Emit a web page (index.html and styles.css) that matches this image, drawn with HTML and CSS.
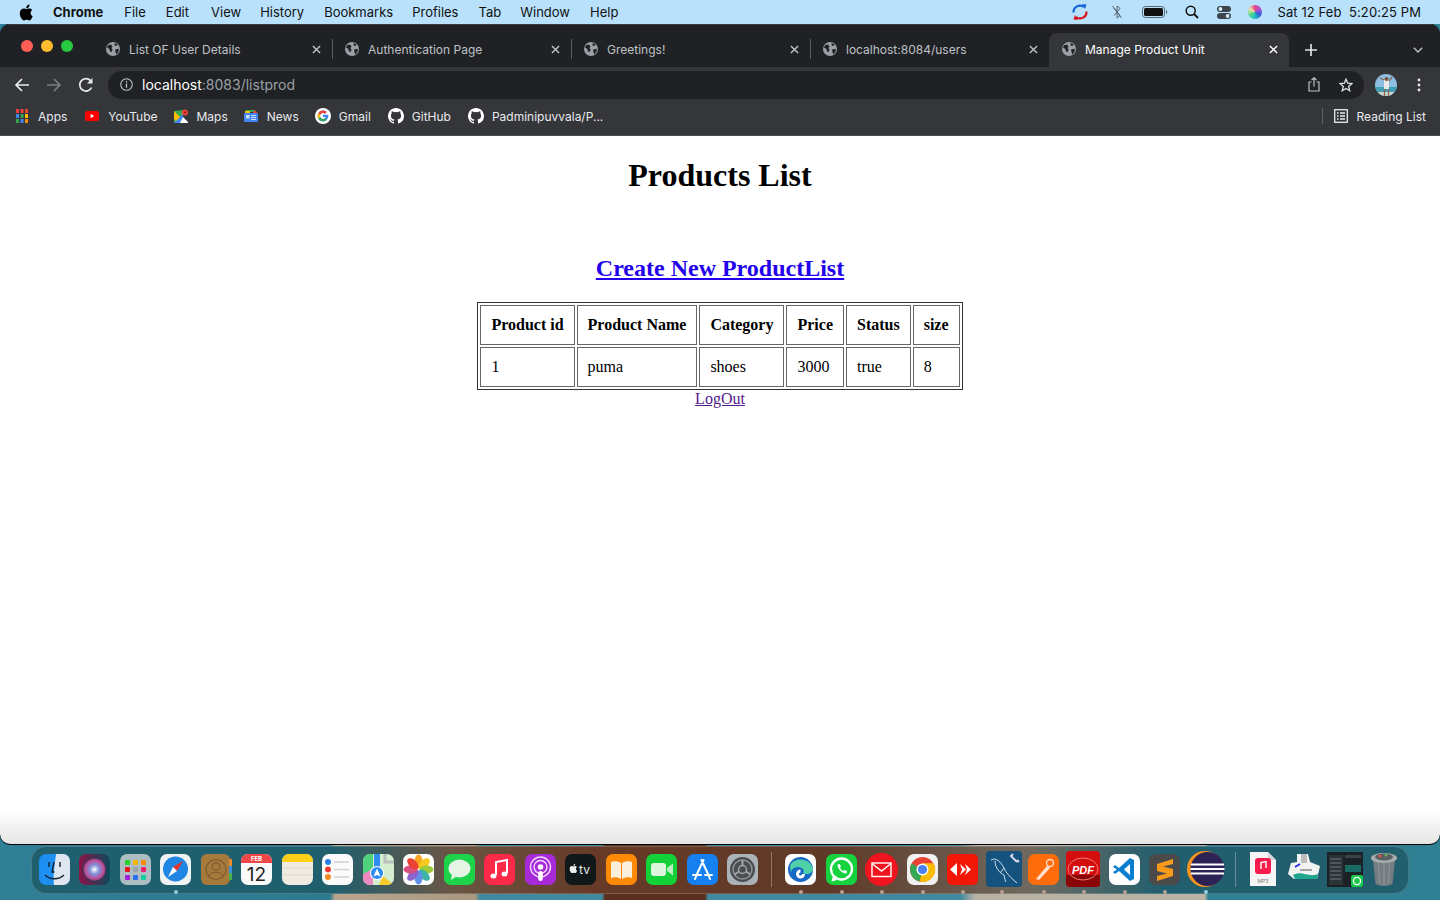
FILE: index.html
```html
<!DOCTYPE html>
<html lang="en">
<head>
<meta charset="utf-8">
<title>Manage Product Unit</title>
<link rel="stylesheet" href="styles.css">
</head>
<body>
<svg class="defs" width="0" height="0">
  <symbol id="globe" viewBox="0 0 14 14">
    <circle cx="7" cy="7" r="7" fill="#9aa0a6"/>
    <path d="M2 3.2 5 2.6 6.6 4.4 5.4 6 6.6 7.6 5.6 10 4 9.4 3.4 7 1 5.6ZM8.6 1 11.6 2.4 10.4 4 8.6 3.6ZM9 7.4 12.8 6.8 12.6 9.6 10.4 12.6 9.6 10.4Z" fill="#202124"/>
  </symbol>
  <symbol id="close" viewBox="0 0 10 10">
    <path d="M1 1 9 9M9 1 1 9" fill="none" stroke="currentColor" stroke-width="1.6"/>
  </symbol>
  <symbol id="octo" viewBox="0 0 16 16">
    <path fill="#fff" d="M8 0C3.58 0 0 3.58 0 8c0 3.54 2.29 6.53 5.47 7.59.4.07.55-.17.55-.38v-1.34c-2.23.48-2.7-1.07-2.7-1.07-.36-.92-.89-1.17-.89-1.17-.73-.5.05-.49.05-.49.8.06 1.23.83 1.23.83.71 1.22 1.87.87 2.33.66.07-.52.28-.87.51-1.07-1.78-.2-3.64-.89-3.64-3.95 0-.87.31-1.59.82-2.15-.08-.2-.36-1.02.08-2.12 0 0 .67-.21 2.2.82a7.6 7.6 0 0 1 4 0c1.53-1.04 2.2-.82 2.2-.82.44 1.1.16 1.92.08 2.12.51.56.82 1.27.82 2.15 0 3.07-1.87 3.75-3.65 3.95.29.25.54.73.54 1.48v2.2c0 .21.15.46.55.38A8 8 0 0 0 16 8c0-4.42-3.58-8-8-8Z"/>
  </symbol>
</svg>

<div class="screen">
  <header class="menubar">
    <svg class="apple" viewBox="0 0 14 17"><path fill="#000" d="M11.6 9c0-2 1.6-2.9 1.7-3-1-1.3-2.4-1.500-2.900-1.500-1.200-.1-2.400.7-3 .7s-1.600-.7-2.600-.7C3.400 4.500 2.200 5.300 1.500 6.400.1 8.800 1.100 12.400 2.500 14.400c.7 1 1.500 2.100 2.500 2 1-.04 1.400-.6 2.600-.6s1.600.6 2.600.6 1.800-1 2.400-2c.8-1.100 1.100-2.200 1.100-2.300-.02-.01-2.100-.8-2.100-3.100ZM9.700 3.200c.5-.7.9-1.600.8-2.600-.8 0-1.800.5-2.400 1.200-.5.6-1 1.600-.8 2.500.9.1 1.800-.4 2.400-1.100Z"/></svg>
    <nav class="menus">
      <span class="menu-app">Chrome</span>
      <span>File</span><span class="menu-edit">Edit</span><span class="menu-tight">View</span><span>History</span><span class="menu-tight">Bookmarks</span><span>Profiles</span><span class="menu-tight">Tab</span><span>Window</span><span>Help</span>
    </nav>
    <div class="status">
      <svg class="st-sync" viewBox="0 0 18 18"><path d="M2.500 9.500A6.500 6.500 0 0 1 13 4" fill="none" stroke="#1565d8" stroke-width="2.200"/><path d="M11 1 15.500 1.500 14 6Z" fill="#1565d8"/><path d="M15.500 8.500A6.500 6.500 0 0 1 5 14" fill="none" stroke="#d8141c" stroke-width="2.200"/><path d="M7 17 2.500 16.500 4 12Z" fill="#d8141c"/></svg>
      <svg class="st-bt" viewBox="0 0 12 14"><path d="M3 3.500 9 10.500 6 13V1L9 3.500 3 10.500" fill="none" stroke="#56646c" stroke-width="1"/><path d="M1.500 1 10.500 13" stroke="#56646c" stroke-width="1"/></svg>
      <svg class="st-batt" viewBox="0 0 26 12"><rect x=".5" y=".5" width="22" height="11" rx="3" fill="none" stroke="#59666e"/><rect x="2" y="2" width="19" height="8" rx="1.600" fill="#111"/><path d="M24 4v4c.8-.3 1.200-1 1.200-2s-.4-1.700-1.200-2Z" fill="#59666e"/></svg>
      <svg class="st-search" viewBox="0 0 14 14"><circle cx="5.700" cy="5.700" r="4.500" fill="none" stroke="#111" stroke-width="1.500"/><path d="M9 9 13 13" stroke="#111" stroke-width="1.800"/></svg>
      <svg class="st-cc" viewBox="0 0 14 13"><rect x="0" y="0" width="14" height="6" rx="3" fill="#3b444a"/><circle cx="3.400" cy="3" r="1.900" fill="#d3ecfb"/><rect x="0" y="7" width="14" height="6" rx="3" fill="#3b444a"/><circle cx="10.600" cy="10" r="1.900" fill="#d3ecfb"/></svg>
      <span class="st-siri"></span>
      <span class="clock">Sat 12 Feb&nbsp; 5:20:25 PM</span>
    </div>
  </header>

  <main class="window">
    <div class="tabstrip">
      <div class="lights"><i class="red"></i><i class="amber"></i><i class="green"></i></div>
      <div class="tabs">
        <div class="tab"><svg class="fav"><use href="#globe"/></svg><span class="tab-title">List OF User Details</span><svg class="x"><use href="#close"/></svg></div>
        <div class="tab"><svg class="fav"><use href="#globe"/></svg><span class="tab-title">Authentication Page</span><svg class="x"><use href="#close"/></svg></div>
        <div class="tab"><svg class="fav"><use href="#globe"/></svg><span class="tab-title">Greetings!</span><svg class="x"><use href="#close"/></svg></div>
        <div class="tab tab-last"><svg class="fav"><use href="#globe"/></svg><span class="tab-title">localhost:8084/users</span><svg class="x"><use href="#close"/></svg></div>
        <div class="tab tab-active"><svg class="fav"><use href="#globe"/></svg><span class="tab-title">Manage Product Unit</span><svg class="x"><use href="#close"/></svg></div>
      </div>
      <svg class="newtab" viewBox="0 0 12 12"><path d="M6 0V12M0 6H12" stroke="#dfe1e5" stroke-width="1.700"/></svg>
      <svg class="tabmenu" viewBox="0 0 10 6"><path d="M.8.800 5 5 9.200.8" fill="none" stroke="#bdc1c6" stroke-width="1.400"/></svg>
    </div>

    <div class="toolbar">
      <svg class="nav" viewBox="0 0 16 16"><path d="M15 8H2M8 2 2 8l6 6" fill="none" stroke="#e8eaed" stroke-width="1.700"/></svg>
      <svg class="nav" viewBox="0 0 16 16"><path d="M1 8H14M8 2l6 6-6 6" fill="none" stroke="#7b7e83" stroke-width="1.700"/></svg>
      <svg class="nav" viewBox="0 0 16 16"><path d="M13.600 10.500A6.200 6.200 0 1 1 12.500 3.600" fill="none" stroke="#e8eaed" stroke-width="1.700"/><path d="M14.500 1V6.500H9Z" fill="#e8eaed"/></svg>
      <div class="omnibox">
        <svg class="info" viewBox="0 0 14 14"><circle cx="7" cy="7" r="6.200" fill="none" stroke="#bdc1c6" stroke-width="1.200"/><path d="M7 6V10.500" stroke="#bdc1c6" stroke-width="1.400"/><circle cx="7" cy="4" r=".9" fill="#bdc1c6"/></svg>
        <span class="url"><b>localhost</b>:8083/listprod</span>
        <svg class="share" viewBox="0 0 12 15"><path d="M3.500 5H1V14H11V5H8.500M6 9.500V1M3.500 3 6 .8 8.500 3" fill="none" stroke="#bdc1c6" stroke-width="1.200"/></svg>
        <svg class="star" viewBox="0 0 14 14"><path d="M7 1.200 8.700 5.200 13 5.600 9.700 8.400 10.700 12.700 7 10.400 3.300 12.700 4.300 8.400 1 5.600 5.300 5.200Z" fill="none" stroke="#dfe1e5" stroke-width="1.300"/></svg>
      </div>
      <svg class="avatar" viewBox="0 0 22 22"><defs><clipPath id="av"><circle cx="11" cy="11" r="11"/></clipPath></defs><g clip-path="url(#av)"><rect width="22" height="22" fill="#8dbfe0"/><rect y="13" width="22" height="9" fill="#3f9fb5"/><rect y="18" width="22" height="4" fill="#cfd3c8"/><rect x="9" y="6" width="5" height="9" fill="#e8e8e6"/><circle cx="11.500" cy="5" r="2" fill="#7a5540"/><path d="M9 6 5 4M14 7 17 3M9.500 15V22M13.500 15V22" stroke="#8a6450" stroke-width="1.300"/></g></svg>
      <svg class="kebab" viewBox="0 0 4 14"><circle cx="2" cy="2" r="1.400" fill="#e8eaed"/><circle cx="2" cy="7" r="1.400" fill="#e8eaed"/><circle cx="2" cy="12" r="1.400" fill="#e8eaed"/></svg>
    </div>

    <div class="bookmarks">
      <div class="bm"><svg class="bm-ic" viewBox="0 0 14 14"><g><rect x="1" y="0" width="3" height="4" fill="#ea4335"/><rect x="5.500" y="0" width="3" height="4" fill="#ea4335"/><rect x="10" y="0" width="3" height="4" fill="#ea4335"/><rect x="1" y="5" width="3" height="4" fill="#4285f4"/><rect x="5.500" y="5" width="3" height="4" fill="#34a853"/><rect x="10" y="5" width="3" height="4" fill="#fbbc04"/><rect x="1" y="10" width="3" height="4" fill="#34a853"/><rect x="5.500" y="10" width="3" height="4" fill="#4285f4"/><rect x="10" y="10" width="3" height="4" fill="#fb8c00"/></g></svg><span>Apps</span></div>
      <div class="bm"><svg class="bm-ic" viewBox="0 0 14 14"><rect y="2" width="14" height="10" rx="2.500" fill="#f00"/><path d="M5.600 4.800 9.200 7 5.600 9.200Z" fill="#fff"/></svg><span>YouTube</span></div>
      <div class="bm"><svg class="bm-ic" viewBox="0 0 14 14"><path d="M0 2 9 1V14H0Z" fill="#34a853"/><path d="M0 14 9 5V14Z" fill="#4285f4"/><path d="M0 2 6 8 2 12 0 10Z" fill="#fbbc04"/><path d="M9 8 14 13V14H6Z" fill="#fff"/><circle cx="11" cy="3.500" r="3" fill="#ea4335"/><circle cx="11" cy="3.500" r="1" fill="#8c1d14"/></svg><span>Maps</span></div>
      <div class="bm"><svg class="bm-ic" viewBox="0 0 14 14"><path d="M2 1H11L12 3H1Z" fill="#34a853"/><path d="M1 2H6V4H1Z" fill="#fbbc04"/><path d="M10 1 13 3V5H9Z" fill="#ea4335"/><rect x="0" y="4" width="14" height="9" rx="1" fill="#4285f4"/><rect x="2" y="6" width="3.500" height="3.500" fill="#cfe0fc"/><path d="M7 6.500H12M7 8.500H12M7 10.500H12" stroke="#cfe0fc"/></svg><span>News</span></div>
      <div class="bm"><svg class="bm-ic bm-g" viewBox="0 0 16 16"><circle cx="8" cy="8" r="8" fill="#fff"/><path d="M12.700 6.800H8V9.100h2.700C10.400 10.400 9.300 11 8 11a3 3 0 1 1 1.900-5.300l1.700-1.700A5.400 5.400 0 1 0 13.400 8c0-.4 0-.8-.1-1.200Z" fill="#4285f4"/><path d="M3.300 5.200 5.300 6.700A3 3 0 0 1 9.900 5.700L11.600 4A5.400 5.400 0 0 0 3.300 5.200Z" fill="#ea4335"/><path d="M2.600 8c0 1 .3 1.900.8 2.700L5.300 9.300A3 3 0 0 1 5.300 6.700L3.300 5.200C2.900 6 2.600 7 2.600 8Z" fill="#fbbc04"/><path d="M3.400 10.700A5.400 5.400 0 0 0 11.800 11.800L10 10.300C8.500 11.500 6 11 5.300 9.300Z" fill="#34a853"/></svg><span>Gmail</span></div>
      <div class="bm"><svg class="bm-ic bm-g"><use href="#octo"/></svg><span>GitHub</span></div>
      <div class="bm"><svg class="bm-ic bm-g"><use href="#octo"/></svg><span>Padminipuvvala/P...</span></div>
      <div class="reading">
        <svg class="rl-ic" viewBox="0 0 14 14"><rect x=".7" y=".7" width="12.600" height="12.600" fill="none" stroke="#e8eaed" stroke-width="1.300"/><path d="M3 4H4.500M3 7H4.500M3 10H4.500M6 4H11M6 7H11M6 10H11" stroke="#e8eaed" stroke-width="1.300"/></svg>
        <span>Reading List</span>
      </div>
    </div>

    <section class="page">
      <h1>Products List</h1>
      <br>
      <h2><a class="link-new" href="#">Create New ProductList</a></h2>
      <table class="products">
        <tr><th>Product id</th><th>Product Name</th><th>Category</th><th>Price</th><th>Status</th><th>size</th></tr>
        <tr><td>1</td><td>puma</td><td>shoes</td><td>3000</td><td>true</td><td>8</td></tr>
      </table>
      <a class="link-out" href="#">LogOut</a>
    </section>
  </main>

  <footer class="desktop">
    <div class="dock">
      <svg class="di" viewBox="0 0 31 31"><rect width="31" height="31" rx="7" fill="#1d8ff2"/><path d="M17 0H24a7 7 0 0 1 7 7V24a7 7 0 0 1-7 7H15C14 24 15 16 17 0Z" fill="#dfe6ef"/><path d="M10 8V13M21 8V13M15 8 13 18H15.500" fill="none" stroke="#123" stroke-width="1.400"/><path d="M6 21C11 26 20 26 25 21" fill="none" stroke="#123" stroke-width="1.300"/></svg>
      <svg class="di" viewBox="0 0 31 31"><defs><linearGradient id="siriBg" x1="0" x2="1"><stop offset="0" stop-color="#8c1248"/><stop offset="1" stop-color="#0c4a5a"/></linearGradient><radialGradient id="siriO"><stop offset="0" stop-color="#fff"/><stop offset=".4" stop-color="#7f8fd8"/><stop offset=".8" stop-color="#c34a92"/><stop offset="1" stop-color="#26324e"/></radialGradient></defs><rect width="31" height="31" rx="7" fill="url(#siriBg)"/><circle cx="15.500" cy="15.500" r="12" fill="url(#siriO)"/></svg>
      <svg class="di" viewBox="0 0 31 31"><rect width="31" height="31" rx="7" fill="#aebdc2"/><g><rect x="5" y="6" width="5" height="5" rx="1" fill="#27d32b"/><rect x="13" y="6" width="5" height="5" rx="1" fill="#f4b400"/><rect x="21" y="6" width="5" height="5" rx="1" fill="#fb8c00"/><rect x="5" y="13" width="5" height="5" rx="1" fill="#e6141c"/><rect x="13" y="13" width="5" height="5" rx="1" fill="#9aa5a8"/><rect x="21" y="13" width="5" height="5" rx="1" fill="#ee1f6f"/><rect x="5" y="21" width="5" height="5" rx="1" fill="#a620d8"/><rect x="13" y="21" width="5" height="5" rx="1" fill="#2a6ef2"/><rect x="21" y="21" width="5" height="5" rx="1" fill="#10d0a0"/></g></svg>
      <div class="dw dot dot-blue"><svg class="di" viewBox="0 0 31 31"><rect width="31" height="31" rx="7" fill="#f0f2f4"/><circle cx="15.500" cy="15" r="12.500" fill="#1f86e4"/><path d="M23 7 17 17 13 13Z" fill="#e8332c"/><path d="M8 23 13 13 17 17Z" fill="#fff"/></svg></div>
      <svg class="di" viewBox="0 0 31 31"><rect width="29" height="31" rx="6" fill="#a67a3c"/><rect x="28" y="5" width="3" height="7" fill="#ee8a2c"/><rect x="28" y="12" width="3" height="7" fill="#3a8fd8"/><rect x="28" y="19" width="3" height="7" fill="#4ab04a"/><circle cx="15" cy="15.500" r="10" fill="none" stroke="#7f5c2c" stroke-width="1.200"/><circle cx="15" cy="12.500" r="3.800" fill="none" stroke="#7f5c2c" stroke-width="1.200"/><path d="M8 22C10 17 20 17 22 22" fill="none" stroke="#7f5c2c" stroke-width="1.200"/></svg>
      <svg class="di" viewBox="0 0 31 31"><rect width="31" height="31" rx="7" fill="#fafafa"/><path d="M0 9V7a7 7 0 0 1 7-7H24a7 7 0 0 1 7 7V9Z" fill="#f04848"/><text class="cal-m" x="15.500" y="7.400" text-anchor="middle">FEB</text><text class="cal-d" x="15.500" y="27" text-anchor="middle">12</text></svg>
      <svg class="di" viewBox="0 0 31 31"><rect width="31" height="31" rx="7" fill="#efebe0"/><path d="M0 8V7a7 7 0 0 1 7-7H24a7 7 0 0 1 7 7V8Z" fill="#fdd017"/><path d="M0 14H31M0 21H31" stroke="#dcd8cc"/></svg>
      <svg class="di" viewBox="0 0 31 31"><rect width="31" height="31" rx="7" fill="#fbfbfb"/><circle cx="6" cy="8" r="3" fill="#2a7fe8"/><circle cx="6" cy="15.500" r="3" fill="#ee3e36"/><circle cx="6" cy="23" r="3" fill="#f58c20"/><path d="M12 8H27M12 15.500H27M12 23H27" stroke="#d2d2d2" stroke-width="1.300"/></svg>
      <svg class="di" viewBox="0 0 31 31"><defs><clipPath id="mp"><rect width="31" height="31" rx="7"/></clipPath></defs><g clip-path="url(#mp)"><rect width="31" height="31" fill="#d5eed0"/><path d="M0 0H10V14L0 22Z" fill="#4fd07a"/><path d="M0 20 10 15V31H0Z" fill="#ee8ac2"/><path d="M20 22 31 31H16Z" fill="#f6cd2c"/><rect x="11" y="0" width="6" height="14" fill="#2f8df2"/><path d="M22 0V8H31" fill="none" stroke="#b7bfc2" stroke-width="3"/><circle cx="14" cy="19" r="7" fill="#fff"/><circle cx="14" cy="19" r="6" fill="#2f8df2"/><path d="M14 14.500 17.500 22.500 14 21 10.500 22.500Z" fill="#fff"/></g></svg>
      <svg class="di" viewBox="0 0 31 31"><rect width="31" height="31" rx="7" fill="#fff"/><g transform="translate(15.500 15.500)"><ellipse cy="-8" rx="4" ry="7" fill="#f6a623"/><ellipse cy="-8" rx="4" ry="7" fill="#f8c91d" transform="rotate(45)"/><ellipse cy="-8" rx="4" ry="7" fill="#9ccc3c" transform="rotate(90)"/><ellipse cy="-8" rx="4" ry="7" fill="#3fb2a8" transform="rotate(135)"/><ellipse cy="-8" rx="4" ry="7" fill="#5f8fe8" transform="rotate(180)"/><ellipse cy="-8" rx="4" ry="7" fill="#8a62c8" transform="rotate(225)"/><ellipse cy="-8" rx="4" ry="7" fill="#d84f80" transform="rotate(270)"/><ellipse cy="-8" rx="4" ry="7" fill="#ea4235" transform="rotate(315)"/></g></svg>
      <svg class="di" viewBox="0 0 31 31"><rect width="31" height="31" rx="7" fill="#1ed34a"/><ellipse cx="15.500" cy="14.500" rx="11" ry="9" fill="#e6f4e6"/><path d="M8 20 7 26 13 22Z" fill="#e6f4e6"/></svg>
      <svg class="di" viewBox="0 0 31 31"><rect width="31" height="31" rx="7" fill="#fb2a48"/><path d="M12 21V8L23 6V19" fill="none" stroke="#fff" stroke-width="2"/><ellipse cx="9.500" cy="22" rx="3" ry="2.500" fill="#fff"/><ellipse cx="20.500" cy="20" rx="3" ry="2.500" fill="#fff"/></svg>
      <svg class="di" viewBox="0 0 31 31"><rect width="31" height="31" rx="7" fill="#a62ad8"/><circle cx="15.500" cy="13" r="10" fill="none" stroke="#f0d8fa" stroke-width="1.400"/><circle cx="15.500" cy="13" r="6.500" fill="none" stroke="#f0d8fa" stroke-width="1.400"/><circle cx="15.500" cy="13" r="2.800" fill="#fff"/><rect x="13.200" y="17" width="4.600" height="10" rx="2.300" fill="#fff"/></svg>
      <svg class="di" viewBox="0 0 31 31"><rect width="31" height="31" rx="7" fill="#10181a"/><path d="M8.900 13.200c0-1.200 1-1.700 1-1.800-.6-.8-1.400-.9-1.700-.9-.7-.1-1.400.4-1.800.4s-.9-.4-1.500-.4c-.8 0-1.500.5-1.900 1.200-.8 1.400-.2 3.500.6 4.700.4.600.9 1.200 1.500 1.200s.8-.4 1.500-.4.900.4 1.500.4 1-.6 1.400-1.200c.5-.7.6-1.300.6-1.300s-1.200-.5-1.200-1.900ZM7.800 9.800c.3-.4.500-.9.500-1.500-.5 0-1.100.3-1.400.7-.3.300-.6.900-.5 1.500.5 0 1.100-.3 1.400-.7Z" fill="#eee" transform="translate(2 1.500)"/><text class="tv" x="14" y="20">tv</text></svg>
      <svg class="di" viewBox="0 0 31 31"><rect width="31" height="31" rx="7" fill="#ff8a05"/><path d="M15 9C12 7 8 7 5 8V24C8 23 12 23 15 25ZM16 9C19 7 23 7 26 8V24C23 23 19 23 16 25Z" fill="#fbeedd"/></svg>
      <svg class="di" viewBox="0 0 31 31"><rect width="31" height="31" rx="7" fill="#12d238"/><rect x="5" y="9" width="15" height="13" rx="3" fill="#dcf5dc"/><path d="M21 14 27 9.500V21.500L21 17Z" fill="#bdeec2"/></svg>
      <svg class="di" viewBox="0 0 31 31"><rect width="31" height="31" rx="7" fill="#1780f0"/><path d="M16.500 6 10 20M14.500 6 21 20M6 21H14M18 21H25M10 20 8 25M21 20 23 25" stroke="#fff" stroke-width="2" stroke-linecap="round"/></svg>
      <svg class="di" viewBox="0 0 31 31"><rect width="31" height="31" rx="7" fill="#a9b3b8"/><circle cx="15.500" cy="15.500" r="12.500" fill="#4a4d50"/><circle cx="15.500" cy="15.500" r="9.500" fill="none" stroke="#8f9396" stroke-width="1.500"/><circle cx="15.500" cy="15.500" r="4" fill="none" stroke="#a3a6a9" stroke-width="1.500"/><path d="M15.500 11.500V6M12 17.500 7.500 20.500M19 17.500 23.500 20.500" stroke="#a3a6a9" stroke-width="2"/></svg>
      <i class="dock-sep"></i>
      <div class="dw dot"><svg class="di" viewBox="0 0 31 31"><rect width="31" height="31" rx="7" fill="#fff"/><circle cx="15.500" cy="15.500" r="12.500" fill="#1668c4"/><path d="M5 12C8 3 25 3 28 15 28 20 21 21 18 19 21 15 14 11 9 14 7 15 6 17 6 19Z" fill="#4fd0a8"/><path d="M15.500 17a3 3 0 1 0 3 3" fill="none" stroke="#fff" stroke-width="3"/></svg></div>
      <div class="dw dot"><svg class="di" viewBox="0 0 31 31"><rect width="31" height="31" rx="7" fill="#16d23e"/><circle cx="15.500" cy="15" r="10.500" fill="none" stroke="#fff" stroke-width="2.300"/><path d="M7 22 5.500 27.500 11 26" fill="#fff"/><path d="M11.500 10.500C11 14 16 20 20.500 19.500L21 17 18.500 16 17.500 17C16 16.500 14.500 15 14 13.500L15 12.500 13.700 10Z" fill="#fff"/></svg></div>
      <div class="dw dot"><svg class="di" viewBox="0 0 31 31"><circle cx="15.500" cy="15.500" r="16.500" fill="#f0141e"/><rect x="6" y="9" width="19" height="13.500" fill="none" stroke="#fff" stroke-width="1.400"/><path d="M6 9.500 15.500 17 25 9.500" fill="none" stroke="#fff" stroke-width="1.400"/></svg></div>
      <div class="dw dot"><svg class="di" viewBox="0 0 31 31"><rect width="31" height="31" rx="7" fill="#f0f0f0"/><circle cx="15.500" cy="15.500" r="12.500" fill="#ea4335"/><path d="M15.500 15.500 4.700 9.500A12.500 12.500 0 0 0 12.500 27.600Z" fill="#34a853"/><path d="M15.500 15.500 26.300 9.200H15.500Z M15.500 15.500 26.400 9.200A12.500 12.500 0 0 1 12.500 27.600Z" fill="#fbbc04"/><circle cx="15.500" cy="15.500" r="6" fill="#fff"/><circle cx="15.500" cy="15.500" r="4.600" fill="#4a80ee"/></svg></div>
      <div class="dw dot"><svg class="di" viewBox="0 0 31 31"><rect width="31" height="31" rx="5" fill="#f31708"/><path d="M3 15.500 10 9V22ZM13 10 19 15.500 13 21 15 15.500ZM18 10 24 15.500 18 21 20 15.500Z" fill="#fff"/></svg></div>
      <div class="dw dot dw-wide"><svg class="di-mysql" viewBox="0 0 36 36"><rect width="36" height="36" rx="4" fill="#15527e"/><path d="M5 9C10 6 15 11 18 17 20 22 25 27 31 32M9 10C9 17 14 22 18 24 19 28 19 30 20 31M18 17 14 22" fill="none" stroke="#cfe2ee" stroke-width="1"/><path d="M25 5 31 11M27 3 25 5 27 7M31 9 33 11" stroke="#dde" stroke-width="1.800" fill="none"/></svg></div>
      <div class="dw dot"><svg class="di" viewBox="0 0 31 31"><rect width="31" height="31" rx="7" fill="#ff6c0c"/><path d="M8 25 19 12 22 14 11 26Z" fill="#ffe2d0"/><circle cx="22" cy="9" r="3.500" fill="none" stroke="#ffe2d0" stroke-width="1.300"/></svg></div>
      <div class="dw dot dw-pdf"><svg class="di-pdf" viewBox="0 0 34 36"><rect width="34" height="36" rx="4" fill="#d40d0d"/><path d="M0 24H34V32a4 4 0 0 1-4 4H4a4 4 0 0 1-4-4Z" fill="#8a0606"/><ellipse cx="17" cy="18" rx="15" ry="11" fill="none" stroke="#f47a7a"/><text class="pdf" x="17" y="22.500" text-anchor="middle">PDF</text></svg></div>
      <div class="dw dot"><svg class="di" viewBox="0 0 31 31"><rect width="31" height="31" rx="7" fill="#fff"/><path d="M21 4 25 6V25L21 27 10 17 6 20 4 18 8 15.500 4 13 6 11 10 14Z" fill="#0a7fd0"/><path d="M21 10 15 15.500 21 21Z" fill="#fff"/></svg></div>
      <div class="dw dot"><svg class="di" viewBox="0 0 31 31"><rect width="31" height="31" rx="7" fill="#4a4a4a"/><path d="M24 5 8 10V17L18 19.500 8 22V27L24 22V15L14 12.500 24 10Z" fill="#f79a1b"/></svg></div>
      <div class="dw dot dot-blue dw-eclipse"><svg class="di-ecl" viewBox="0 0 38 36"><circle cx="18" cy="18" r="18" fill="#f7941e"/><circle cx="20.500" cy="18" r="17" fill="#2c2255"/><path d="M4 13.500H37M3.500 18H37.500M4 22.500H37" stroke="#fff" stroke-width="2"/></svg></div>
      <i class="dock-sep dock-sep-b"></i>
      <svg class="di-doc" viewBox="0 0 26 34"><path d="M0 0H18L26 8V34H0Z" fill="#f4f4f4"/><path d="M18 0V8H26Z" fill="#d5d5d5"/><rect x="5" y="6" width="16" height="16" rx="3" fill="#f81c4c"/><path d="M11 17V10.500L16 9.500V16" fill="none" stroke="#fff" stroke-width="1.400"/><text class="mp3" x="13" y="31" text-anchor="middle">MP3</text></svg>
      <svg class="di-tpl" viewBox="0 0 34 30"><path d="M9 0H20L22 8 32 12 29 25H6L0 20 3 9 9 8Z" fill="#f2f3f3"/><path d="M5 21C14 16 20 24 30 20L29 25H7Z" fill="#20a78e"/><path d="M7 13 12 10" stroke="#2a2ae8" stroke-width="2"/><path d="M12 16H24" stroke="#555" stroke-width="1"/><rect x="13" y="0" width="6" height="9" fill="#bcbcbc"/></svg>
      <svg class="di-shot" viewBox="0 0 36 35"><rect width="36" height="35" fill="#1b2226"/><rect x="2" y="3" width="14" height="30" fill="#2c3337"/><path d="M3 7H14M3 11H14M3 15H14M3 19H14M3 23H14M3 27H14" stroke="#6f7a80" stroke-width="1.200"/><rect x="18" y="13" width="16" height="7" fill="#186a62"/><rect x="18" y="3" width="16" height="3" fill="#3a4347"/><rect x="24" y="23" width="12" height="12" rx="2" fill="#19c94d"/><circle cx="30" cy="29" r="3.600" fill="none" stroke="#fff" stroke-width="1.300"/></svg>
      <svg class="di-trash" viewBox="0 0 28 36"><path d="M3 8H25L22.500 33Q14 37 5.500 33Z" fill="#777e82"/><path d="M8 11 10 32M14 11V33M20 11 18 32" stroke="#92989b"/><ellipse cx="14" cy="7" rx="13" ry="5" fill="#a8adaf"/><ellipse cx="14" cy="6" rx="9" ry="3.500" fill="#5a5f62"/><circle cx="10" cy="5" r="1.500" fill="#d9534f"/><circle cx="16" cy="4" r="1.500" fill="#5fb55f"/></svg>
    </div>
  </footer>
</div>
</body>
</html>
```
FILE: styles.css
```css
* { box-sizing: border-box; }
html, body { margin: 0; padding: 0; height: 900px; overflow: hidden; }
.defs { display: block; height: 0; width: 0; }
.screen { width: 1440px; height: 900px; display: flex; flex-direction: column; background: linear-gradient(90deg, #2f7f96 0, #2d7a8e 330px, #b9a58c 335px, #a89880 475px, #3f8aa0 480px, #3f8aa0 602px, #5a3020 605px, #5a3020 705px, #3f8aa0 708px, #3f8aa0 960px, #b7b2a4 975px, #b7b2a4 1205px, #2f8092 1208px, #2f8092 100%); font-family: Inter, "Liberation Sans", sans-serif; overflow: hidden; }

.menubar { height: 24px; flex: none; background: #b9e1fc; display: flex; align-items: center; font-size: 13px; color: #111; padding-left: 19px; }
.apple { width: 14px; height: 17px; margin-right: 20px; }
.menus { display: flex; gap: 20px; }
.menu-app { font-weight: 700; margin-right: 1px; }
.menu-edit { margin-right: 2px; }
.menu-tight { margin-right: -1px; }
.status { margin-left: auto; display: flex; align-items: center; padding-right: 19px; }
.st-sync { width: 18px; height: 18px; margin-right: 22px; }
.st-bt { width: 12px; height: 14px; margin-right: 19px; }
.st-batt { width: 26px; height: 12px; margin-right: 17px; }
.st-search { width: 14px; height: 14px; margin-right: 18px; }
.st-cc { width: 14px; height: 13px; margin-right: 17px; }
.st-siri { width: 14px; height: 14px; border-radius: 50%; background: conic-gradient(#e0408a, #b050d0, #3060d8, #20c0c0, #50d890, #f0e0a0, #e0408a); margin-right: 16px; }
.clock { white-space: nowrap; letter-spacing: .09px; }

.window { flex: none; height: 821px; display: flex; flex-direction: column; background: #000; border-radius: 10px; overflow: hidden; }

.tabstrip { height: 43px; flex: none; background: #202124; display: flex; position: relative; border-top: 1px solid #3c3c3f; color: #bdc1c6; }
.lights { width: 93px; flex: none; display: flex; gap: 8px; padding: 15px 0 0 21px; }
.lights i { width: 12px; height: 12px; border-radius: 50%; }
.red { background: #ff5f57; }
.amber { background: #febc2e; }
.green { background: #28c840; }
.tabs { display: flex; padding-top: 8px; }
.tab { width: 239px; height: 34px; display: flex; align-items: center; padding: 0 0 2px 13px; font-size: 12px; position: relative; }
.tab::after { content: ""; position: absolute; right: -1px; top: 6px; height: 20px; width: 1px; background: #5a5c60; }
.tab-last::after, .tab-active::after { display: none; }
.fav { width: 14px; height: 14px; flex: none; margin-right: 9px; }
.tab-title { flex: 1; white-space: nowrap; overflow: hidden; }
.x { width: 9px; height: 9px; margin-right: 11px; flex: none; color: #bdc1c6; }
.tab-active { background: #35363a; border-radius: 8px 8px 0 0; color: #fff; width: 240px; }
.tab-active .x { color: #fff; }
.newtab { width: 12px; height: 12px; margin: 19px 0 0 16px; flex: none; }
.tabmenu { width: 10px; height: 6px; margin: 22px 0 0 auto; position: absolute; right: 17px; }

.toolbar { height: 32px; flex: none; background: #35363a; display: flex; align-items: flex-end; padding-left: 14px; }
.nav { width: 16px; height: 16px; margin: 0 16px 6px 0; flex: none; }
.omnibox { height: 28px; width: 1256px; margin-left: -2px; background: #202124; border-radius: 14px; display: flex; align-items: center; padding: 0 0 1px 12px; flex: none; }
.info { width: 13px; height: 13px; margin-right: 9px; }
.url { font-size: 14px; color: #9aa0a6; flex: 1; }
.url b { font-weight: 400; color: #fff; }
.share { width: 12px; height: 15px; margin-right: 19px; }
.star { width: 14px; height: 14px; margin-right: 11px; }
.avatar { width: 22px; height: 22px; margin: 0 0 3px 11px; flex: none; }
.kebab { width: 4px; height: 14px; margin: 0 0 7px 20px; flex: none; }

.bookmarks { height: 37px; flex: none; background: #35363a; display: flex; align-items: center; padding: 0 0 2px 15px; font-size: 12px; color: #e8eaed; border-bottom: 1px solid #4a4b4e; }
.bm { display: flex; align-items: center; margin-right: 17px; white-space: nowrap; }
.bm:nth-child(1) { margin-right: 18px; }
.bm:nth-child(2), .bm:nth-child(3), .bm:nth-child(4) { margin-right: 16px; }
.bm-ic { width: 14px; height: 14px; margin-right: 9px; }
.bm-g { width: 16px; height: 16px; margin-right: 8px; }
.reading { margin-left: auto; display: flex; align-items: center; height: 16px; border-left: 1px solid #5f6368; padding: 0 14px 0 11px; white-space: nowrap; }
.rl-ic { width: 14px; height: 14px; margin-right: 9px; }

.page { flex: 1; background: #fff linear-gradient(#fff calc(100% - 34px), #e5e5e5); border-radius: 0 0 10px 10px; font-family: "Liberation Serif", serif; color: #000; text-align: center; font-size: 16px; margin-bottom: 1px; padding-top: 21.44px; }
h1 { font-size: 32px; margin: 0 0 21.44px; font-weight: 700; }
h2 { font-size: 24px; margin: 20.92px 0 19.92px; font-weight: 700; }
.link-new { color: #2200ee; }
.link-out { color: #551a8b; }
.products { border: 1px solid #333; border-collapse: separate; border-spacing: 2px; margin: 0 auto; }
.products th, .products td { border: 1px solid #666; padding: 10px; text-align: left; }
.products th { text-align: center; }

.desktop { flex: 1; min-height: 0; display: flex; justify-content: center; align-items: flex-start; }
.dock { width: 1378px; height: 48px; margin-top: 1px; border-radius: 15px; border: 1px solid rgba(255,255,255,.18); background: linear-gradient(90deg, #205f6e 0, #205f6e 300px, #6a5544 420px, #663a26 560px, #5f3a28 800px, #6f6a60 1000px, #225f6e 1130px, #225f6e 100%); display: flex; align-items: center; padding: 0 0 2px 7px; }
.dock > * { flex: none; }
.di, .dw { width: 31px; height: 31px; display: block; }
.dock > .di, .dock > .dw { margin-right: 9.47px; }
.dw { position: relative; }
.dw .di { overflow: visible; }
.dot::after { content: ""; position: absolute; width: 4px; height: 4px; border-radius: 50%; background: #b99f90; left: 14px; bottom: -9px; }
.dot-blue::after { background: #8fd0e0; }
.dw-wide { width: 36px; margin-right: 6px !important; margin-left: -2px; }
.dw-wide .di-mysql { width: 36px; height: 36px; position: absolute; top: -3px; left: 0; }
.dw-pdf .di-pdf { width: 34px; height: 36px; position: absolute; top: -3px; left: -2px; }
.dw-eclipse .di-ecl { width: 38px; height: 36px; position: absolute; top: -3px; left: -3px; }
.dock-sep { width: 1px; height: 35px; background: rgba(255,255,255,.3); margin: 0 13px 0 4px; }
.dock-sep-b { margin: 0 14px 0 4.5px; }
.di-doc { width: 26px; height: 34px; margin-right: 12px; }
.di-tpl { width: 34px; height: 30px; margin-right: 5px; }
.di-shot { width: 36px; height: 35px; margin-right: 7px; }
.di-trash { width: 28px; height: 36px; }
.cal-m { font: 700 6px Inter, sans-serif; fill: #fff; }
.cal-d { font: 400 19px Inter, sans-serif; fill: #222; }
.tv { font: 400 12px Inter, sans-serif; fill: #eee; }
.pdf { font: italic 700 11px "Liberation Sans", sans-serif; fill: #fff; }
.mp3 { font: 400 5px Inter, sans-serif; fill: #777; }
```
